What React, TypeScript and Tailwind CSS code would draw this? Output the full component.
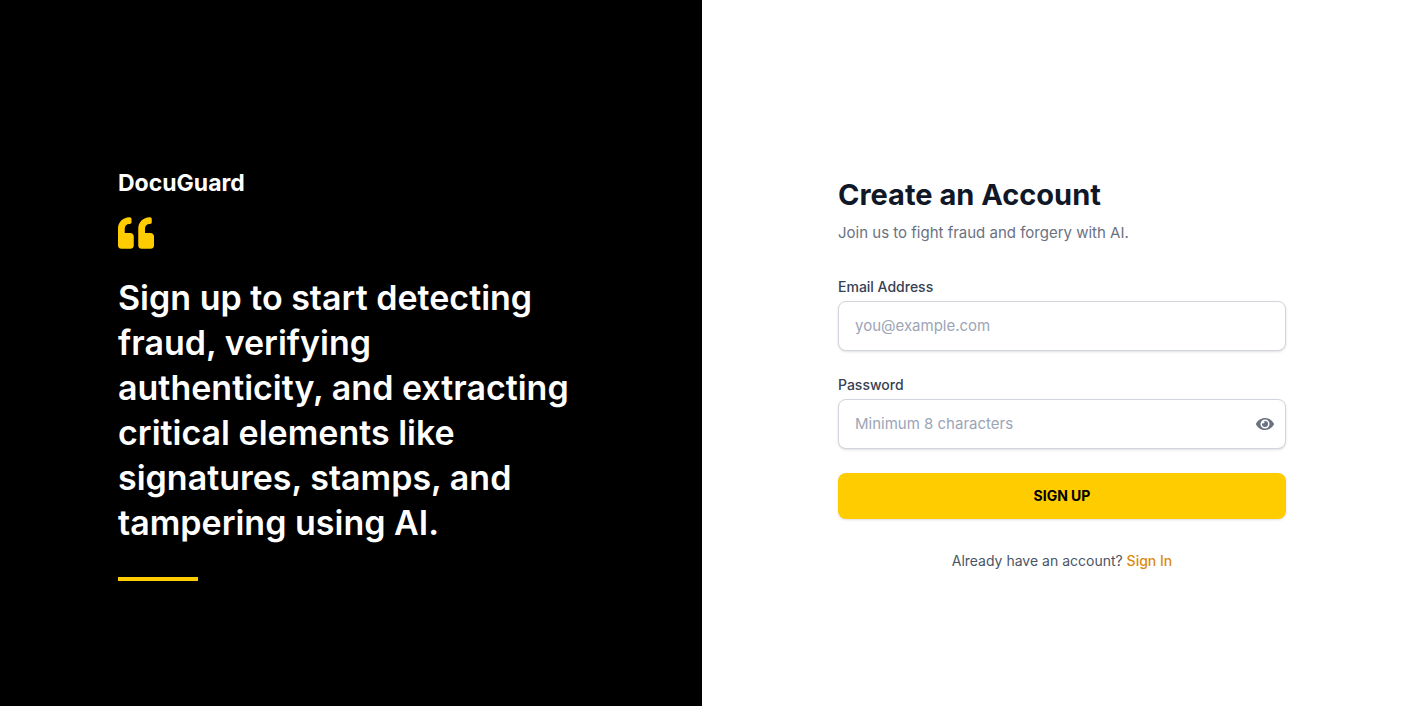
import { useState } from "react";
import { FaEye, FaEyeSlash, FaQuoteLeft } from "react-icons/fa";

const fieldClass =
  "block w-full rounded-lg border border-gray-300 bg-white px-4 py-3 text-[15px] leading-6 text-gray-900 shadow-sm placeholder:text-[#9ca5b6] focus:outline-2 focus:outline-[#ffcc00]";

function Quote() {
  return (
    <section className="flex flex-col justify-center bg-black px-12 pt-[90px] pb-12 text-white">
      <div className="mx-auto w-full max-w-[466px]">
        <h2 className="mb-4 text-[23px] leading-8 font-bold">DocuGuard</h2>
        <FaQuoteLeft className="mb-6 size-9 text-[#ffcc00]" aria-hidden="true" />
        <p className="text-[34px] leading-[45px] font-semibold">
          Sign up to start detecting fraud, verifying authenticity, and extracting critical elements
          like signatures, stamps, and tampering using AI.
        </p>
        <div className="mt-8 h-1 w-20 bg-[#ffcc00]" />
      </div>
    </section>
  );
}

function SignUpForm() {
  const [visible, setVisible] = useState(false);
  return (
    <main className="flex items-center justify-center bg-white pt-[90px] pr-12 pb-12 pl-[62px]">
      <div className="w-full max-w-md">
        <h1 className="mb-2 text-[29px] leading-9 font-bold text-gray-900">Create an Account</h1>
        <p className="mb-8 text-[15px] leading-6 text-gray-500">
          Join us to fight fraud and forgery with AI.
        </p>
        <form className="space-y-6" onSubmit={(e) => e.preventDefault()}>
          <div>
            <label htmlFor="email" className="mb-1 block text-sm font-medium text-gray-700">
              Email Address
            </label>
            <input id="email" type="email" placeholder="you@example.com" className={fieldClass} />
          </div>
          <div>
            <label htmlFor="password" className="mb-1 block text-sm font-medium text-gray-700">
              Password
            </label>
            <div className="relative">
              <input
                id="password"
                type={visible ? "text" : "password"}
                placeholder="Minimum 8 characters"
                className={fieldClass}
              />
              <button
                type="button"
                aria-label={visible ? "Hide password" : "Show password"}
                onClick={() => setVisible(!visible)}
                className="absolute inset-y-0 right-0 flex items-center pr-3 text-gray-500"
              >
                {visible ? <FaEyeSlash className="size-[18px]" /> : <FaEye className="size-[18px]" />}
              </button>
            </div>
          </div>
          <button
            type="submit"
            className="w-full rounded-lg border border-transparent bg-[#ffcc00] px-4 py-3 text-sm font-bold text-black uppercase shadow-sm"
          >
            Sign Up
          </button>
        </form>
        <p className="mt-8 text-center text-sm text-gray-600">
          Already have an account?{" "}
          <a href="#signin" className="font-medium text-[#dc8a0b]">
            Sign In
          </a>
        </p>
      </div>
    </main>
  );
}

export default function App() {
  return (
    <div className="grid min-h-screen grid-cols-1 font-[Inter,sans-serif] md:grid-cols-[351fr_353fr]">
      <Quote />
      <SignUpForm />
    </div>
  );
}
